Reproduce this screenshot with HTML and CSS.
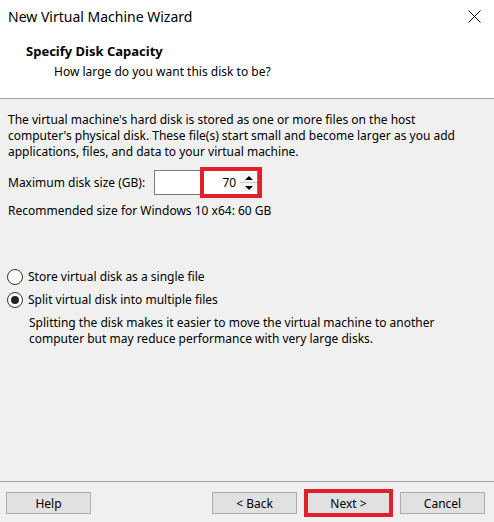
FILE: index.html
```html
<!DOCTYPE html>
<html lang="en">
<head>
    <meta charset="UTF-8">
    <meta name="viewport" content="width=device-width, initial-scale=1.0">
    <title>New Virtual Machine Wizard</title>
    <link rel="stylesheet" href="styles.css">
</head>
<body>
    <div class="window">
        <div class="titlebar">
            <span class="title">New Virtual Machine Wizard</span>
            <svg class="close" width="13" height="13" viewBox="0 0 13 13">
                <path d="M0.5 0.5 L12.5 12.5 M12.5 0.5 L0.5 12.5" stroke="#000" stroke-width="1" fill="none"/>
            </svg>
        </div>
        <div class="banner">
            <div class="banner-title">Specify Disk Capacity</div>
            <div class="banner-sub">How large do you want this disk to be?</div>
        </div>
        <div class="content">
            <p class="intro">The virtual machine's hard disk is stored as one or more files on the host<br>computer's physical disk. These file(s) start small and become larger as you add<br>applications, files, and data to your virtual machine.</p>
            <div class="size-row">
                <label for="diskSize">Maximum disk size (GB):</label>
                <div class="spinbox">
                    <input type="text" id="diskSize" value="70">
                    <div class="spin-buttons">
                        <span class="spin-up"></span>
                        <span class="spin-down"></span>
                    </div>
                    <!-- red annotation box -->
                    <span class="mark mark-size"></span>
                </div>
            </div>
            <p class="recommend">Recommended size for Windows 10 x64: 60 GB</p>
            <div class="options">
                <div class="radio"><span class="dot"></span>Store virtual disk as a single file</div>
                <div class="radio checked"><span class="dot"></span>Split virtual disk into multiple files</div>
                <p class="note">Splitting the disk makes it easier to move the virtual machine to another<br>computer but may reduce performance with very large disks.</p>
            </div>
        </div>
        <div class="footer">
            <button>Help</button>
            <div class="nav-buttons">
                <button>&lt; Back</button>
                <button class="next">Next &gt;</button>
                <button>Cancel</button>
            </div>
        </div>
    </div>
</body>
</html>
```
FILE: styles.css
```css
body {
    margin: 0;
    font-family: "Noto Sans", "Open Sans", sans-serif;
    font-size: 12px;
    color: #000;
    background-color: #f0f0f0;
}
.window {
    display: flex;
    flex-direction: column;
    height: 100vh;
}
.titlebar {
    display: flex;
    align-items: center;
    justify-content: space-between;
    height: 32px;
    padding: 0 13px 0 8px;
    background-color: white;
}
.title {
    font-size: 14px;
}
.banner {
    background-color: white;
    padding: 11px 0 18px 26px;
    border-bottom: 1px solid #a0a0a0;
    line-height: 16px;
}
.banner-title {
    font-weight: bold;
    font-size: 13px;
}
.banner-sub {
    margin-top: 5px;
    padding-left: 28px;
}
.content {
    flex: 1;
    padding: 13px 8px 0 8px;
    line-height: 16px;
}
.content p {
    margin: 0;
}
.size-row {
    display: flex;
    align-items: center;
    gap: 9px;
    margin-top: 10px;
}
.spinbox {
    position: relative;
    display: flex;
    width: 104px;
    height: 25px;
    border: 1px solid #7a7a7a;
    background-color: white;
    box-sizing: border-box;
}
.spinbox input {
    flex: 1;
    min-width: 0;
    border: none;
    outline: none;
    padding: 0 4px 0 0;
    font: inherit;
    text-align: right;
    background: transparent;
}
.spin-buttons {
    display: flex;
    flex-direction: column;
    justify-content: center;
    width: 17px;
    padding: 2px 0;
}
.spin-up,
.spin-down {
    flex: 1;
    position: relative;
    background-color: #f4f4f4;
}
.spin-up {
    border-bottom: 1px solid #c8c8c8;
}
.spin-up::after,
.spin-down::after {
    content: "";
    position: absolute;
    left: 5px;
    top: 3px;
    border-left: 4px solid transparent;
    border-right: 4px solid transparent;
}
.spin-up::after {
    border-bottom: 4px solid #000;
}
.spin-down::after {
    border-top: 4px solid #000;
}
.mark {
    position: absolute;
    border: 4px solid #e2202c;
    pointer-events: none;
}
.mark-size {
    left: 45px;
    top: -4px;
    width: 54px;
    height: 23px;
}
.recommend {
    margin-top: 8px !important;
}
.options {
    margin-top: 50px;
}
.radio {
    display: flex;
    align-items: center;
    gap: 5px;
    height: 16px;
    margin-bottom: 7px;
}
.dot {
    width: 16px;
    height: 16px;
    margin-left: -1px;
    border: 1px solid #333;
    border-radius: 50%;
    background-color: white;
    box-sizing: border-box;
    position: relative;
}
.radio.checked .dot::after {
    content: "";
    position: absolute;
    left: 3px;
    top: 3px;
    width: 8px;
    height: 8px;
    border-radius: 50%;
    background-color: #222;
}
.note {
    padding-left: 21px;
}
.footer {
    display: flex;
    justify-content: space-between;
    padding: 10px 9px 8px 6px;
    border-top: 1px solid #a0a0a0;
}
.nav-buttons {
    display: flex;
    gap: 10px;
}
button {
    width: 85px;
    height: 22px;
    padding: 0;
    font: inherit;
    color: #000;
    background-color: #e1e1e1;
    border: 1px solid #adadad;
}
.next {
    width: 83px;
    outline: 4px solid #e2202c;
    outline-offset: -1px;
}
```
